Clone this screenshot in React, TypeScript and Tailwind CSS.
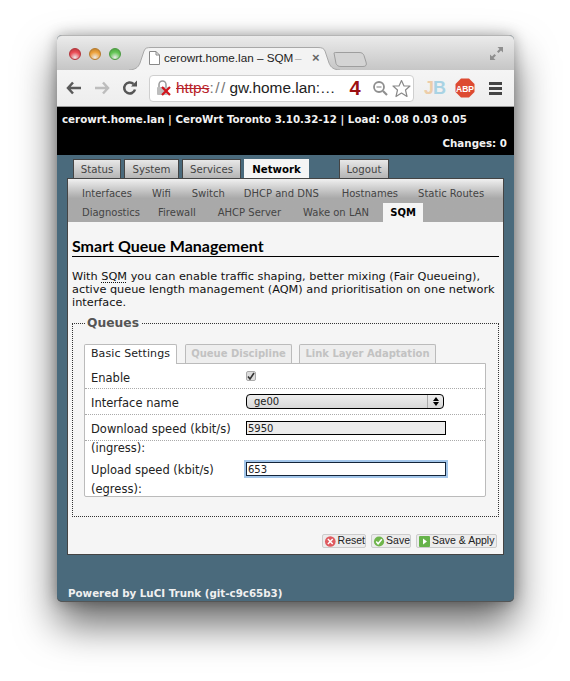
import React from "react";

const V = "font-['DejaVu_Sans',Verdana,sans-serif]";

function Tl({ c, d }: { c: string; d: string }) {
  return <span className="w-3 h-3 rounded-full border" style={{ background: `radial-gradient(circle at 50% 85%, #fff8 0%, ${c} 55%, ${d} 100%)`, borderColor: d }} />;
}

function ChromeTab() {
  return (
    <svg className="absolute left-[72px] top-[9px]" width="240" height="25" viewBox="0 0 240 25">
      <path d="M0 25 C6 24.500 9 23 11 18 L15 6 C16 3 18 2.500 22 2.500 L189 2.500 C193 2.500 195 3.500 196 6 L200 18 C202 23 205 24.500 211 25" fill="#f3f3f3" stroke="#a8a8a8" />
      <path d="M205 8 C205 7.500 206 7.500 208 7.500 L230 7.500 C233 7.500 234 8.500 235 10.500 L237 17 C238 20 237 21.500 234 21.500 L212 21.500 C209 21.500 208 20.500 207 18.500 Z" fill="#d4d4d4" stroke="#9e9e9e" />
    </svg>
  );
}

function Chrome() {
  return (
    <>
      <div className="relative h-[35px] bg-gradient-to-b from-[#ebebeb] to-[#c6c6c6] rounded-t-[5px] flex items-start border-t border-[#b5b5b5]">
        <ChromeTab />
        <div className="flex gap-[8px] ml-[12px] mt-[12px]">
          <Tl c="#ea4c55" d="#b3333a" />
          <Tl c="#eda23b" d="#b67a2c" />
          <Tl c="#62c554" d="#4a9a40" />
        </div>
        <div className="relative ml-[28px] mt-[15px] flex items-center font-['Liberation_Sans',sans-serif] text-[11.700px] text-[#222] leading-[14px] whitespace-nowrap">
          <svg width="11" height="14" viewBox="0 0 11 14" className="mr-[4px]"><path d="M.5.5H7L10.500 4V13.500H.5Z M7 .5V4H10.500" fill="#fff" stroke="#888" /></svg>
          <span className="w-[131px]">cerowrt.home.lan – SQM</span>
          <span className="w-[17px] text-[#aaa]">–</span>
          <span className="text-[#666] text-[13px] font-bold">×</span>
        </div>
        <svg className="absolute right-[10px] top-[10px]" width="15" height="15" viewBox="0 0 15 15">
          <path d="M8.500 1H14V6.500L12 4.500L9.500 7L8 5.500L10.500 3Z" fill="#8e8e8e" />
          <path d="M6.500 14H1V8.500L3 10.500L5.500 8L7 9.500L4.500 12Z" fill="#8e8e8e" />
        </svg>
      </div>
      <div className="h-[37px] bg-gradient-to-b from-[#f5f5f5] to-[#ededed] border-b border-[#9a9a9a] flex items-center pl-[9px]">
        <svg width="16" height="14" viewBox="0 0 16 14" className="text-[#5a5a5a]"><path d="M7 1.500L2 7L7 12.500M2 7H15" fill="none" stroke="currentColor" strokeWidth="2.500" /></svg>
        <svg width="16" height="14" viewBox="0 0 16 14" className="ml-[12px] text-[#bdbdbd]"><path d="M9 1.500L14 7L9 12.500M14 7H1" fill="none" stroke="currentColor" strokeWidth="2.500" /></svg>
        <svg width="16" height="16" viewBox="0 0 16 16" className="ml-[12px]"><path d="M13 9.500A5.500 5.500 0 1 1 11.500 4" fill="none" stroke="#555" strokeWidth="2.500" /><path d="M9 6.500H15V0.500Z" fill="#555" /></svg>
        <div className="ml-[11px] w-[265px] h-[27px] bg-white rounded-[4px] border border-[#cfcfcf] flex items-center pl-[6px] font-['Liberation_Sans',sans-serif] text-[15.400px] leading-[20px] whitespace-nowrap">
          <svg width="16" height="18" viewBox="0 0 16 18" className="shrink-0">
            <path d="M3 8V5.500A3.500 3.500 0 0 1 10 5.500V8" fill="none" stroke="#999" strokeWidth="1.500" />
            <rect x="1" y="8" width="11" height="8" rx="1" fill="#bdbdbd" />
            <path d="M6 8L14 16M14 8L6 16" stroke="#d2141c" strokeWidth="2.200" />
          </svg>
          <span className="ml-[4px] text-[#b8232a] line-through">https</span>
          <span className="text-[#777] tracking-[1.500px] w-[20px]">://</span>
          <span className="text-[#222]">gw.home.lan:…</span>
          <span className="ml-[14px] text-[#9c0f12] text-[20px] font-bold">4</span>
          <svg width="17" height="17" viewBox="0 0 17 17" className="ml-[11px] shrink-0"><circle cx="7" cy="7" r="5" fill="none" stroke="#8f8f8f" strokeWidth="1.800" /><path d="M4.500 7H9.500" stroke="#8f8f8f" strokeWidth="1.200" /><path d="M11 11L15 15" stroke="#8f8f8f" strokeWidth="2.200" /></svg>
          <svg width="19" height="19" viewBox="0 0 19 19" className="ml-[3px] shrink-0"><path d="M9.500 1.500L12 7H18L13.500 11L15 17.500L9.500 14L4 17.500L5.500 11L1 7H7Z" fill="#fff" stroke="#8a8a8a" strokeWidth="1.200" strokeLinejoin="round" /></svg>
        </div>
        <span className="ml-[10px] font-['Liberation_Sans',sans-serif] font-bold text-[18px] w-[21px] tracking-[-1px] whitespace-nowrap"><span className="text-[#edcda9]">J</span><span className="text-[#a9d3e4]">B</span></span>
        <svg width="20" height="20" viewBox="0 0 20 20" className="ml-[10px]">
          <path d="M6 .5H14L19.500 6V14L14 19.500H6L.5 14V6Z" fill="#dd4a31" />
          <text x="10" y="13.500" textAnchor="middle" fontSize="8.500" fontWeight="700" fill="#fff" fontFamily="Liberation Sans">ABP</text>
        </svg>
        <div className="ml-[14px] w-[13px] flex flex-col gap-[2px]">
          <span className="h-[3px] bg-[#444]" />
          <span className="h-[3px] bg-[#444]" />
          <span className="h-[3px] bg-[#444]" />
        </div>
      </div>
    </>
  );
}

function MainTab({ t, active, cls }: { t: string; active?: boolean; cls: string }) {
  return (
    <div className={`h-[19px] leading-[19px] text-center text-[10.200px] ${cls} ${active ? "bg-[#f5f5f5] text-black font-bold border-t border-[#f5f5f5]" : "bg-gradient-to-b from-[#e8e8e8] to-[#b5b5b5] text-[#444] border-t border-x border-[#444]"}`}>
      {t}
    </div>
  );
}

function Row({ children, line = true, cls = "" }: { children: React.ReactNode; line?: boolean; cls?: string }) {
  return <div className={`flex ${line ? "border-b border-dotted border-[#aaa]" : ""} ${cls}`}>{children}</div>;
}

function Btn({ t, cls, color, kind }: { t: string; cls: string; color: string; kind: "x" | "check" | "play" }) {
  return (
    <div className={`h-[14px] flex items-center border border-[#ccc] rounded-[2px] bg-[#ececec] font-['Liberation_Sans',sans-serif] text-[10.500px] text-[#222] whitespace-nowrap ${cls}`}>
      <svg width="13" height="13" viewBox="0 0 13 13" className="mx-[1px]">
        {kind === "play" ? <rect x="1" y="1" width="11" height="11" rx="1" fill={color} /> : <circle cx="6.500" cy="6.500" r="5.500" fill={color} />}
        {kind === "x" && <path d="M4 4L9 9M9 4L4 9" stroke="#fff" strokeWidth="1.500" />}
        {kind === "check" && <path d="M3.500 6.500L5.500 9L9.500 4" fill="none" stroke="#fff" strokeWidth="1.600" />}
        {kind === "play" && <path d="M5 3.500L9 6.500L5 9.500Z" fill="#fff" />}
      </svg>
      {t}
    </div>
  );
}

export default function App() {
  return (
    <div className={`w-[570px] h-[681px] bg-white overflow-hidden pt-[35px] pl-[57px] ${V}`}>
      <div className="w-[457px] h-[567px] rounded-[5px] flex flex-col shadow-[inset_0_-1px_0_#555,0_22px_40px_rgba(0,0,0,0.6),0_0_14px_rgba(0,0,0,0.3)] bg-[#4a6a7c]">
        <Chrome />
        <div className="h-[48px] bg-black text-[#f2f2f2] font-bold text-[10.300px] leading-[13px] flex flex-col pl-[5px] pr-[7px] pt-[6px] whitespace-nowrap">
          <div>cerowrt.home.lan | CeroWrt Toronto 3.10.32-12 | Load: 0.08 0.03 0.05</div>
          <div className="text-right mt-[11px]">Changes: 0</div>
        </div>
        <div className="flex mt-[4px] ml-[16px] h-[19px]">
          <MainTab t="Status" cls="w-[48px]" />
          <MainTab t="System" cls="w-[55px] ml-[3px]" />
          <MainTab t="Services" cls="w-[59px] ml-[3px]" />
          <MainTab t="Network" active cls="w-[65px] ml-[3px]" />
          <MainTab t="Logout" cls="w-[50px] ml-[30px]" />
        </div>
        <div className="mx-[10px] h-[377px] bg-[#f5f5f5] border border-[#444] flex flex-col">
          <div className="h-[43px] bg-gradient-to-b from-[#f0f0f0] via-[#a9a9a9] via-45% to-[#a9a9a9] text-[10px] text-[#444] relative whitespace-nowrap">
            <div className="flex h-[24px] pt-[4px] items-center pl-[14px] gap-[20px]">
              <span>Interfaces</span><span>Wifi</span><span className="ml-[1px]">Switch</span><span className="ml-[-1px]">DHCP and DNS</span><span className="ml-[3px]">Hostnames</span><span>Static Routes</span>
            </div>
            <div className="flex h-[19px] items-center pl-[14px] gap-[20px]">
              <span>Diagnostics</span><span className="ml-[-2px]">Firewall</span><span className="ml-[2px]">AHCP Server</span><span className="ml-[2px]">Wake on LAN</span>
              <span className="h-[19px] w-[40px] ml-[-6px] bg-[#f5f5f5] text-black font-bold text-center leading-[19px]">SQM</span>
            </div>
          </div>
          <div className="px-[4px] pt-[15px] flex-1 flex flex-col text-[#222]">
            <h2 className="font-['Lato',sans-serif] font-bold text-[16px] leading-[17px] h-[20px] border-b border-black text-black">Smart Queue Management</h2>
            <p className="mt-[13px] text-[11.300px] leading-[13px] text-[#111]">
              With <span className="underline decoration-dotted underline-offset-2">SQM</span> you can enable traffic shaping, better mixing (Fair Queueing), active queue length management (AQM) and prioritisation on one network interface.
            </p>
            <fieldset className="mt-[7px] h-[201px] border border-dotted border-[#333] px-[11px] relative">
              <legend className="ml-[1px] px-[2px] font-bold text-[12.300px] leading-[14px] text-[#555]">Queues</legend>
              <div className="flex mt-[14px] h-[19px] text-[10px] relative z-10 whitespace-nowrap">
                <div className="w-[93px] h-[20px] text-center leading-[18px] bg-white border-x border-t border-[#bbb] rounded-t-[2px] text-[#222] text-[11px] tracking-[0.1px]">Basic Settings</div>
                <div className="w-[107px] ml-[8px] h-[19px] text-center leading-[18px] bg-[#eee] border-x border-t border-[#bbb] rounded-t-[2px] text-[#c2c2c2] font-bold">Queue Discipline</div>
                <div className="w-[137px] ml-[7px] h-[19px] text-center leading-[18px] bg-[#eee] border-x border-t border-[#bbb] rounded-t-[2px] text-[#c2c2c2] font-bold">Link Layer Adaptation</div>
              </div>
              <div className="w-[402px] h-[134px] bg-white border border-[#bbb] rounded-b-[2px] text-[11.500px] leading-[19px] text-[#222]">
                <Row cls="h-[25px] pl-[6px] items-center">
                  <span className="w-[155px] pt-[4px]">Enable</span>
                  <span className="w-[10px] h-[10px] bg-[#ddd] border border-[#aaa] rounded-[2px] flex items-center justify-center">
                    <svg width="8" height="8" viewBox="0 0 8 8"><path d="M1 4.500L3 7L7 1" fill="none" stroke="#333" strokeWidth="1.600" /></svg>
                  </span>
                </Row>
                <Row cls="h-[26px] pl-[6px] items-center">
                  <span className="w-[155px] pt-[4px]">Interface name</span>
                  <div className="w-[198px] h-[15px] rounded-[4px] border border-black bg-gradient-to-b from-[#eee] to-[#d8d8d8] flex items-center pl-[7px] text-[10px] leading-[13px] relative">
                    ge00
                    <span className="absolute right-0 top-0 bottom-0 w-[16px] border-l border-[#aaa] flex flex-col items-center justify-center gap-[1px]">
                      <span className="w-0 h-0 border-x-[3px] border-x-transparent border-b-[4px] border-b-black" />
                      <span className="w-0 h-0 border-x-[3px] border-x-transparent border-t-[4px] border-t-black" />
                    </span>
                  </div>
                </Row>
                <Row cls="h-[26px] pl-[6px] items-center">
                  <span className="w-[155px] pt-[4px] whitespace-nowrap">Download speed (kbit/s)</span>
                  <div className="w-[200px] h-[14px] border border-black bg-[#ececec] text-[10px] leading-[13px] pl-[1px]">5950</div>
                </Row>
                <Row line={false} cls="pl-[6px] h-[17px] leading-[15px]">(ingress):</Row>
                <Row line={false} cls="pl-[6px] h-[22px] items-center">
                  <span className="w-[155px] pt-[2px] whitespace-nowrap">Upload speed (kbit/s)</span>
                  <div className="w-[200px] h-[14px] border border-[#14253a] bg-white text-[10px] leading-[13px] pl-[1px] shadow-[0_0_0_2px_#a3c6ea]">653</div>
                </Row>
                <Row line={false} cls="pl-[6px] h-[19px]">(egress):</Row>
              </div>
            </fieldset>
            <div className="flex mt-[17px] pr-[2px] justify-end gap-[5px]">
              <Btn t="Reset" cls="w-[44px]" color="#df5a5f" kind="x" />
              <Btn t="Save" cls="w-[40px]" color="#6fb54b" kind="check" />
              <Btn t="Save & Apply" cls="w-[81px]" color="#66b34a" kind="play" />
            </div>
          </div>
        </div>
        <div className="mt-[32px] ml-[11px] text-[10.300px] leading-[13px] font-bold text-[#f0f0f0] whitespace-nowrap">Powered by LuCI Trunk (git-c9c65b3)</div>
      </div>
    </div>
  );
}
